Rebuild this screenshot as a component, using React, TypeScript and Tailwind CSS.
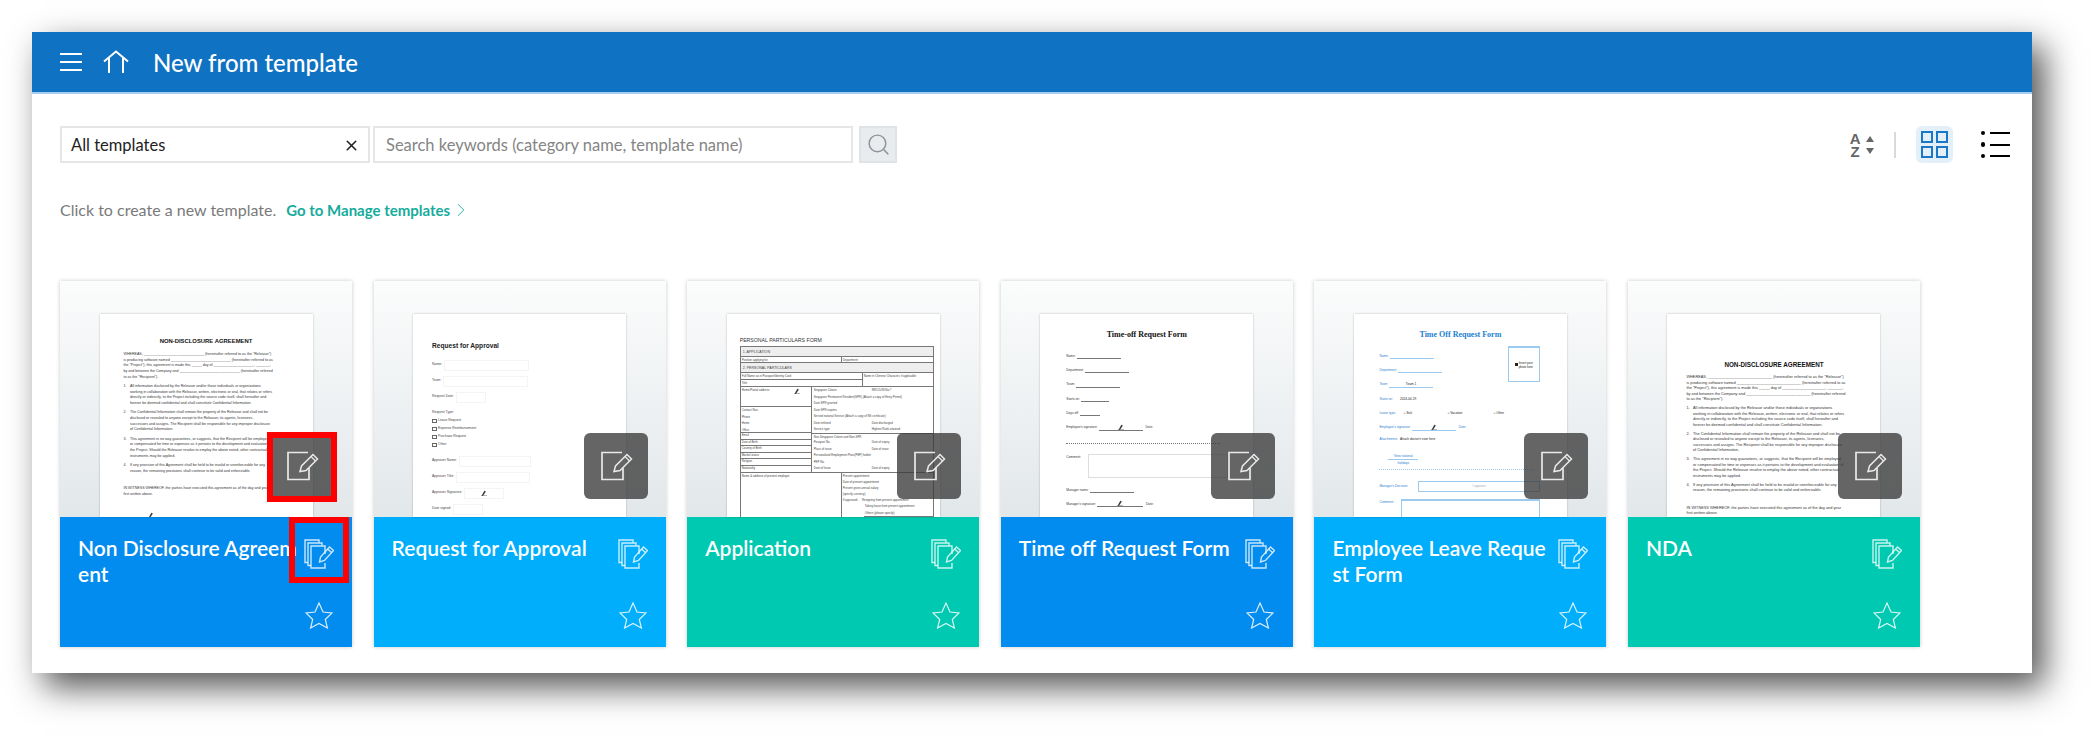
import { ChevronRight, Search, X } from "lucide-react";

type Mark = "nda-a" | "nda-b" | "request" | "personal" | "timeoff" | "leave";

interface ITemplate {
  title: string;
  color: string;
  doc: Mark;
  marked?: boolean;
}

const templates: ITemplate[] = [
  { title: "Non Disclosure Agreement", color: "bg-[#038cef]", doc: "nda-a", marked: true },
  { title: "Request for Approval", color: "bg-[#00aefb]", doc: "request" },
  { title: "Application", color: "bg-[#00c9b1]", doc: "personal" },
  { title: "Time off Request Form", color: "bg-[#038cef]", doc: "timeoff" },
  { title: "Employee Leave Request Form", color: "bg-[#00aefb]", doc: "leave" },
  { title: "NDA", color: "bg-[#00c9b1]", doc: "nda-b" },
];

const ndaIntro = [
  "WHEREAS, ______________________________ (hereinafter referred to as the \"Releasor\")",
  "is producing software named ______________________________ (hereinafter referred to as",
  "the \"Project\"), this agreement is made this _____ day of ____________________, _______,",
  "by and between the Company and ______________________________ (hereinafter referred",
  "to as the \"Recipient\").",
];

const ndaItems = [
  [
    "All information disclosed by the Releasor and/or those individuals or organizations",
    "working in collaboration with the Releasor, written, electronic or oral, that relates or refers",
    "directly or indirectly, to the Project including the source code itself, shall hereafter and",
    "forever be deemed confidential and shall constitute Confidential Information.",
  ],
  [
    "The Confidential Information shall remain the property of the Releasor and shall not be",
    "disclosed or revealed to anyone except to the Releasor, its agents, licensees,",
    "successors and assigns. The Recipient shall be responsible for any improper disclosure",
    "of Confidential Information.",
  ],
  [
    "This agreement in no way guarantees, or suggests, that the Recipient will be employed,",
    "or compensated for time or expenses as it pertains to the development and evaluation of",
    "the Project. Should the Releasor resolve to employ the above noted, other contractual",
    "instruments may be applied.",
  ],
  [
    "If any provision of this Agreement shall be held to be invalid or unenforceable for any",
    "reason, the remaining provisions shall continue to be valid and enforceable.",
  ],
];

function Signature({ className = "" }: { className?: string }) {
  return (
    <svg width="6" height="6" viewBox="0 0 6 6" className={className}>
      <path d="M1 5.5 L3.5 1 L4.5 1.6 L2 5.5 Z M0 5.7 H6" fill="#222" stroke="#222" strokeWidth="0.4" />
    </svg>
  );
}

function NdaDoc({ wide }: { wide?: boolean }) {
  return (
    <div
      className={
        wide
          ? "pt-[47px] pl-[19px] text-[3.85px] leading-[5.5px] text-[#333] whitespace-nowrap"
          : "pt-[23px] pl-[24px] text-[3.62px] leading-[5.7px] text-[#333] whitespace-nowrap"
      }
    >
      <div
        className={
          wide
            ? "text-[6.3px] leading-[8px] font-bold text-[#111] text-center -ml-[19px] mb-[6px]"
            : "text-[5.9px] leading-[8px] font-bold text-[#111] text-center -ml-[24px] mb-[7px]"
        }
      >
        NON-DISCLOSURE AGREEMENT
      </div>
      {ndaIntro.map((line) => (
        <div key={line}>{line}</div>
      ))}
      {ndaItems.map((item, i) => (
        <div key={item[0]} className="flex mt-[3.5px]">
          <span className="w-[6.5px]">{i + 1}.</span>
          <div>
            {item.map((line) => (
              <div key={line}>{line}</div>
            ))}
          </div>
        </div>
      ))}
      <div className="mt-[12px]">IN WITNESS WHEREOF, the parties have executed this agreement as of the day and year</div>
      <div>first written above.</div>
      {!wide && <Signature className="ml-[24px] mt-[14px]" />}
    </div>
  );
}

function RequestRow({ label, w, children }: { label: string; w: string; children?: React.ReactNode }) {
  return (
    <div className="flex items-center h-[16px]">
      <span>{label}</span>
      <div className={`ml-[2px] h-[11px] border border-[#f4f4f4] flex items-center justify-center ${w}`}>{children}</div>
    </div>
  );
}

function RequestDoc() {
  return (
    <div className="pt-[27px] pl-[19px] text-[3.4px] text-[#444] whitespace-nowrap">
      <div className="text-[6.6px] leading-[10px] font-bold text-[#222] mb-[6px]">Request for Approval</div>
      <RequestRow label="Name:" w="w-[85px]" />
      <RequestRow label="Team:" w="w-[85px]" />
      <RequestRow label="Request Date:" w="w-[30px]" />
      <div className="h-[12px] pt-[4px] flex items-center">Request Type:</div>
      {["Leave Request", "Expense Reimbursement", "Purchase Request", "Other"].map((t) => (
        <div key={t} className="flex items-center h-[8px] gap-[1.5px]">
          <span className="w-[4.5px] h-[4.5px] border-[0.5px] border-[#666]" />
          {t}
        </div>
      ))}
      <div className="h-[4px]" />
      <RequestRow label="Approver Name:" w="w-[72px]" />
      <RequestRow label="Approver Title:" w="w-[74px]" />
      <RequestRow label="Approver Signature:" w="w-[40px]">
        <Signature />
      </RequestRow>
      <RequestRow label="Date signed:" w="w-[30px]" />
    </div>
  );
}

function TableRow({ a, b }: { a: string; b?: string }) {
  return (
    <div className="flex items-center h-[6.67px]">
      <span className="pl-[2px] w-[60px]">{a}</span>
      {b && <span>{b}</span>}
    </div>
  );
}

function PersonalDoc() {
  return (
    <div className="pt-[22px] pl-[13px] text-[2.9px] leading-[6px] text-[#444] whitespace-nowrap">
      <div className="text-[5.2px] leading-[8px] text-[#333] mb-[2px]">PERSONAL PARTICULARS FORM</div>
      <div className="w-[194px] border border-[#777]">
        <div className="h-[10px] flex items-center pl-[2px] text-[3.6px] bg-[#eee] border-b border-[#777]">1. APPLICATION</div>
        <div className="flex h-[6px] border-b border-[#777]">
          <div className="w-[101px] pl-[1px] border-r border-[#777]">Position applying for</div>
          <div className="pl-[1px]">Department</div>
        </div>
        <div className="h-[10px] flex items-center pl-[2px] text-[3.6px] bg-[#eee] border-b border-[#777]">2. PERSONAL PARTICULARS</div>
        <div className="flex border-b border-[#777]">
          <div className="w-[122px] border-r border-[#777]">
            <div className="h-[6.5px] pl-[1px] border-b border-[#777]">Full Name as in Passport/Identity Card</div>
            <div className="h-[6.5px] pl-[1px]">Title</div>
          </div>
          <div className="pl-[1px]">Name in Chinese Character, if applicable</div>
        </div>
        <div className="flex border-b border-[#777]">
          <div className="w-[71px] border-r border-[#777]">
            <div className="h-[20px] pl-[1px] border-b border-[#777] flex justify-between pr-[11px]">
              Home/Postal address
              <Signature className="mt-[1px]" />
            </div>
            <div className="h-[26px] pl-[1px] border-b border-[#777] leading-[6.5px]">
              <div>Contact Nos.</div>
              <div>Phone</div>
              <div>Home</div>
              <div>Office</div>
            </div>
            {["Email", "Date of Birth", "Country of Birth", "Marital status", "Religion", "Nationality"].map((t) => (
              <div key={t} className="h-[6.5px] pl-[1px] leading-[5.5px] border-b last:border-b-0 border-[#777]">
                {t}
              </div>
            ))}
          </div>
          <div className="flex-1 [&>div]:h-[6.5px]">
            <TableRow a="Singapore Citizen" b="NRIC/UIN No.?" />
            <TableRow a="Singapore Permanent Resident(SPR) (Attach a copy of Entry Permit)" />
            <TableRow a="Date SPR granted" />
            <TableRow a="Date SPR expires" />
            <TableRow a="Served national Service (Attach a copy of NS certificate)" />
            <TableRow a="Date enlisted" b="Date discharged" />
            <TableRow a="Service type" b="Highest Rank attained" />
            <div className="border-t border-[#777]">
              <TableRow a="Non-Singapore Citizen and Non-SPR" />
            </div>
            <TableRow a="Passport No." b="Date of expiry" />
            <TableRow a="Place of issue" b="Date of issue" />
            <TableRow a="Personalized Employment Pass(PEP) holder" />
            <TableRow a="PEP No." />
            <TableRow a="Date of Issue" b="Date of expiry" />
          </div>
        </div>
        <div className="flex h-[60px]">
          <div className="w-[101px] pl-[1px] border-r border-[#777]">Name & address of present employer</div>
          <div className="flex-1 pl-[1px] leading-[6.1px]">
            <div>Present appointment</div>
            <div>Date of present appointment</div>
            <div>Present gross annual salary</div>
            <div>(specify currency)</div>
            <div className="flex gap-[4px]">
              <span>If approved:</span>
              <span>Resigning from present appointment</span>
            </div>
            <div className="pl-[22px]">Taking leave from present appointment</div>
            <div className="pl-[22px]">Others (please specify)</div>
            <div className="ml-[21px] h-[10px] border border-r-0 border-[#777]" />
          </div>
        </div>
      </div>
    </div>
  );
}

function FormLine({ label, w, children, tail }: { label: string; w: string; children?: React.ReactNode; tail?: string }) {
  return (
    <div className="flex items-center h-[14.3px]">
      <span>{label}</span>
      <div className={`ml-[1px] h-[6px] border-b flex items-end justify-center text-[#222] ${w}`}>{children}</div>
      {tail && <span className="ml-[3px]">{tail}</span>}
    </div>
  );
}

function TimeoffDoc() {
  return (
    <div className="pt-[16px] text-[3.2px] text-[#333] whitespace-nowrap [&_div]:border-[#777]">
      <div className="text-[8px] leading-[10px] font-bold font-['Liberation_Serif'] text-[#111] text-center mb-[9px]">
        Time-off Request Form
      </div>
      <div className="pl-[26px]">
        <FormLine label="Name:" w="w-[44px]" />
        <FormLine label="Department:" w="w-[44px]" />
        <FormLine label="Team:" w="w-[44px]" />
        <FormLine label="Starts on:" w="w-[28px]" />
        <FormLine label="Days off:" w="w-[20px]" />
        <FormLine label="Employee's signature:" w="w-[44px]" tail="Date:">
          <Signature />
        </FormLine>
        <div className="w-[154px] mt-[8px] mb-[10px] border-t-[0.5px] border-dotted" />
        <div className="flex h-[24px]">
          <span className="w-[22px] pt-[1px]">Comment:</span>
          <div className="w-[140px] h-[24px] border-[#ddd]! border" />
        </div>
        <div className="h-[5px]" />
        <FormLine label="Manager name:" w="w-[44px]" />
        <FormLine label="Manager's signature:" w="w-[46px]" tail="Date:">
          <Signature />
        </FormLine>
      </div>
    </div>
  );
}

function LeaveDoc() {
  return (
    <div className="pt-[16px] text-[3.2px] text-[#2b82cf] whitespace-nowrap [&_div]:border-[#9ccaee]">
      <div className="text-[8px] leading-[10px] font-bold font-['Liberation_Serif'] text-[#1a7fd0] text-center mb-[9px]">
        Time Off Request Form
      </div>
      <div className="pl-[25.5px] pr-[27px]">
        <div className="flex justify-between">
          <div>
            <FormLine label="Name:" w="w-[44px]" />
            <FormLine label="Department:" w="w-[44px]" />
            <FormLine label="Team:" w="w-[44px]">
              Team 1
            </FormLine>
          </div>
          <div className="w-[32px] h-[36px] -mt-[3px] border border-t-2 flex items-center justify-center gap-[1px] text-[3px] leading-[4px] text-[#222]">
            <span className="w-[3px] h-[2.5px] bg-[#222]" />
            <span className="text-center">
              Insert your
              <br />
              photo here
            </span>
          </div>
        </div>
        <FormLine label="Starts on:" w="w-[28px] border-b-0!">
          2024-04-29
        </FormLine>
        <div className="flex items-center h-[14.3px]">
          <span className="w-[24px]">Leave type:</span>
          <span className="w-[44px] text-[#222]">○ Sick</span>
          <span className="w-[46px] text-[#222]">○ Vacation</span>
          <span className="text-[#222]">○ Other</span>
        </div>
        <FormLine label="Employee's signature:" w="w-[44px]" tail="Date:">
          <Signature />
        </FormLine>
        <div className="flex items-center h-[10px]">
          <span>Attachments:</span>
          <span className="ml-[2px] text-[#222]">Attach doctor's note here</span>
        </div>
        <div className="w-[30px] ml-[9px] mt-[8px] text-center leading-[6px]">
          <div className="border-b">View national</div>
          <div>holidays</div>
        </div>
        <div className="w-[155px] mt-[3px] mb-[11px] border-t-[0.5px] border-dotted" />
        <div className="flex items-center h-[11px]">
          <span className="w-[39px]">Manager's Decision:</span>
          <div className="w-[122px] h-[11px] border flex items-center justify-center text-[#aaa]">I approve</div>
        </div>
        <div className="flex mt-[7px]">
          <span className="w-[22px] pt-[1px]">Comment:</span>
          <div className="w-[139px] h-[40px] border border-t-2" />
        </div>
      </div>
    </div>
  );
}

function PreviewDoc({ doc }: { doc: Mark }) {
  if (doc === "nda-a") return <NdaDoc />;
  if (doc === "nda-b") return <NdaDoc wide />;
  if (doc === "request") return <RequestDoc />;
  if (doc === "personal") return <PersonalDoc />;
  if (doc === "timeoff") return <TimeoffDoc />;
  return <LeaveDoc />;
}

function EditIcon() {
  return (
    <svg width="32" height="30" viewBox="0 0 32 30" fill="none" stroke="#e9e9e9" strokeWidth="1.7">
      <path d="M21 1.5 H1 V28.5 H22 V17" />
      <path d="M13 20.5 L14.5 15 L26 3.5 L30.5 8 L19 19.5 Z" strokeWidth="1.5" />
      <path d="M24 5.5 L28.5 10" strokeWidth="1.2" />
    </svg>
  );
}

function CopyEditIcon() {
  return (
    <svg width="30" height="30" viewBox="0 0 30 30" fill="none" stroke="#fff" strokeOpacity="0.78" strokeWidth="1.4">
      <path d="M4 23.5 H1 V1 H15 V3.5" />
      <path d="M7 26.5 H4 V4 H18 V6.5" />
      <path d="M21 15 V7 H7 V29 H21 V24" />
      <path d="M15.5 23 L16.5 18 L25.5 8 L29.5 11.5 L20.5 21.5 Z" />
      <path d="M23.5 10 L27.5 13.5" />
    </svg>
  );
}

function StarIcon() {
  return (
    <svg width="28" height="27" viewBox="0 0 28 27" fill="none" stroke="#fff" strokeOpacity="0.85" strokeWidth="1.2">
      <path d="M14 1 L18 10 L27 11 L20.3 17.5 L22.4 26 L14 21.5 L5.6 26 L7.7 17.5 L1 11 L10 10 Z" />
    </svg>
  );
}

function TemplateCard({ title, color, doc, marked }: ITemplate) {
  return (
    <div className="relative w-[292px] h-[366px] shrink-0 flex flex-col shadow-[0_0_4px_rgba(0,0,0,0.22)]">
      <div className="relative h-[236px] pt-[33px] bg-gradient-to-b from-[#fbfcfc] to-[#e2e7ea]">
        <div className="w-[213px] h-[203px] mx-auto bg-white overflow-hidden shadow-[0_0_2px_rgba(0,0,0,0.25)] font-['Liberation_Sans',sans-serif]">
          <PreviewDoc doc={doc} />
        </div>
        <div className="absolute right-[18px] top-[152px] w-[64px] h-[66px] rounded-md bg-[rgba(58,58,58,0.78)] flex items-center justify-center pl-[2px]">
          <EditIcon />
        </div>
      </div>
      <div className={`flex-1 flex justify-between ${color}`}>
        <div className="w-[220px] ml-[18px] pt-[18px] text-[21px] leading-[26px] font-semibold text-white break-all">
          {title}
        </div>
        <div className="w-[30px] mr-[18px] pt-[22px] flex flex-col items-center gap-[33px]">
          <CopyEditIcon />
          <StarIcon />
        </div>
      </div>
      {marked && (
        <>
          <div className="absolute left-[207px] top-[151px] w-[70px] h-[70px] border-[6px] border-[#f00]" />
          <div className="absolute left-[229px] top-[236px] w-[60px] h-[66px] border-[6px] border-[#f00]" />
        </>
      )}
    </div>
  );
}

function SortIcon() {
  return (
    <div className="flex items-center gap-[5px] text-[#666]">
      <div className="flex flex-col items-center text-[15px] leading-[13px] font-bold font-['Liberation_Sans']">
        <span>A</span>
        <span>Z</span>
      </div>
      <svg width="8" height="20" viewBox="0 0 8 20" fill="#666">
        <path d="M4 1 L8 7 H0 Z M0 13 H8 L4 19 Z" />
      </svg>
    </div>
  );
}

export default function App() {
  return (
    <div className="w-[2097px] h-[738px] pl-[32px] pt-[32px] bg-white overflow-hidden font-['Lato',sans-serif]">
      <div className="w-[2000px] h-[641px] bg-white shadow-[12px_14px_32px_rgba(0,0,0,0.68)]">
        <header className="h-[62px] bg-[#0f72c3] border-b-2 border-b-[#a9cdec] flex items-center pl-[28px] text-white">
          <div className="w-[22px] flex flex-col gap-[6px]">
            <span className="h-[2px] bg-white" />
            <span className="h-[2px] bg-white" />
            <span className="h-[2px] bg-white" />
          </div>
          <svg width="26" height="24" viewBox="0 0 26 24" fill="none" stroke="#fff" strokeWidth="2" className="ml-[21px]">
            <path d="M1 11.5 L13 1.5 L25 11.5 M6 8 V23 M20 8 V23" />
          </svg>
          <h1 className="ml-[24px] pt-[2px] text-[24px] font-medium">New from template</h1>
        </header>

        <div className="pl-[28px] pr-[22px] pt-[32px]">
          <div className="flex items-start">
            <div className="w-[310px] h-[37px] border-2 border-[#e6e6e6] flex items-center justify-between pl-[9px] pr-[8px] pt-[1px] text-[16.5px] text-[#222]">
              All templates
              <X size={17} strokeWidth={2.2} />
            </div>
            <div className="ml-[3px] w-[480px] h-[37px] border-2 border-[#e6e6e6] flex items-center pl-[11px] pt-[1px] text-[16.5px] text-[#858585]">
              Search keywords (category name, template name)
            </div>
            <div className="ml-[6px] w-[38px] h-[37px] border-2 border-[#dfe3e6] bg-[#e9ecef] flex items-center justify-center">
              <Search size={25} strokeWidth={1.4} className="text-[#8f9498]" />
            </div>
            <div className="ml-auto h-[37px] flex items-center">
              <SortIcon />
              <span className="ml-[20px] w-[2px] h-[26px] bg-[#d9d9d9]" />
              <div className="ml-[20px] w-[37px] h-[37px] rounded-md bg-[#e3eff9] grid grid-cols-[12px_12px] gap-[3px] content-center justify-center">
                <span className="w-[12px] h-[12px] border-2 border-[#1a78c6]" />
                <span className="w-[12px] h-[12px] border-2 border-[#1a78c6]" />
                <span className="w-[12px] h-[12px] border-2 border-[#1a78c6]" />
                <span className="w-[12px] h-[12px] border-2 border-[#1a78c6]" />
              </div>
              <div className="ml-[28px] flex flex-col gap-[7px]">
                {[0, 1, 2].map((i) => (
                  <div key={i} className="flex items-center gap-[5px]">
                    <span className="w-[4.5px] h-[4.5px] rounded-full bg-black" />
                    <span className="w-[20px] h-[2px] bg-black" />
                  </div>
                ))}
              </div>
            </div>
          </div>

          <div className="mt-[37px] h-[20px] flex items-center text-[16px] text-[#7a7a7a]">
            Click to create a new template.
            <span className="ml-[10px] text-[15px] font-bold text-[#16ac9c]">Go to Manage templates</span>
            <ChevronRight size={22} strokeWidth={1} className="text-[#16ac9c]" />
          </div>

          <div className="mt-[61px] flex gap-[21.6px]">
            {templates.map((t) => (
              <TemplateCard key={t.title} {...t} />
            ))}
          </div>
        </div>
      </div>
    </div>
  );
}
